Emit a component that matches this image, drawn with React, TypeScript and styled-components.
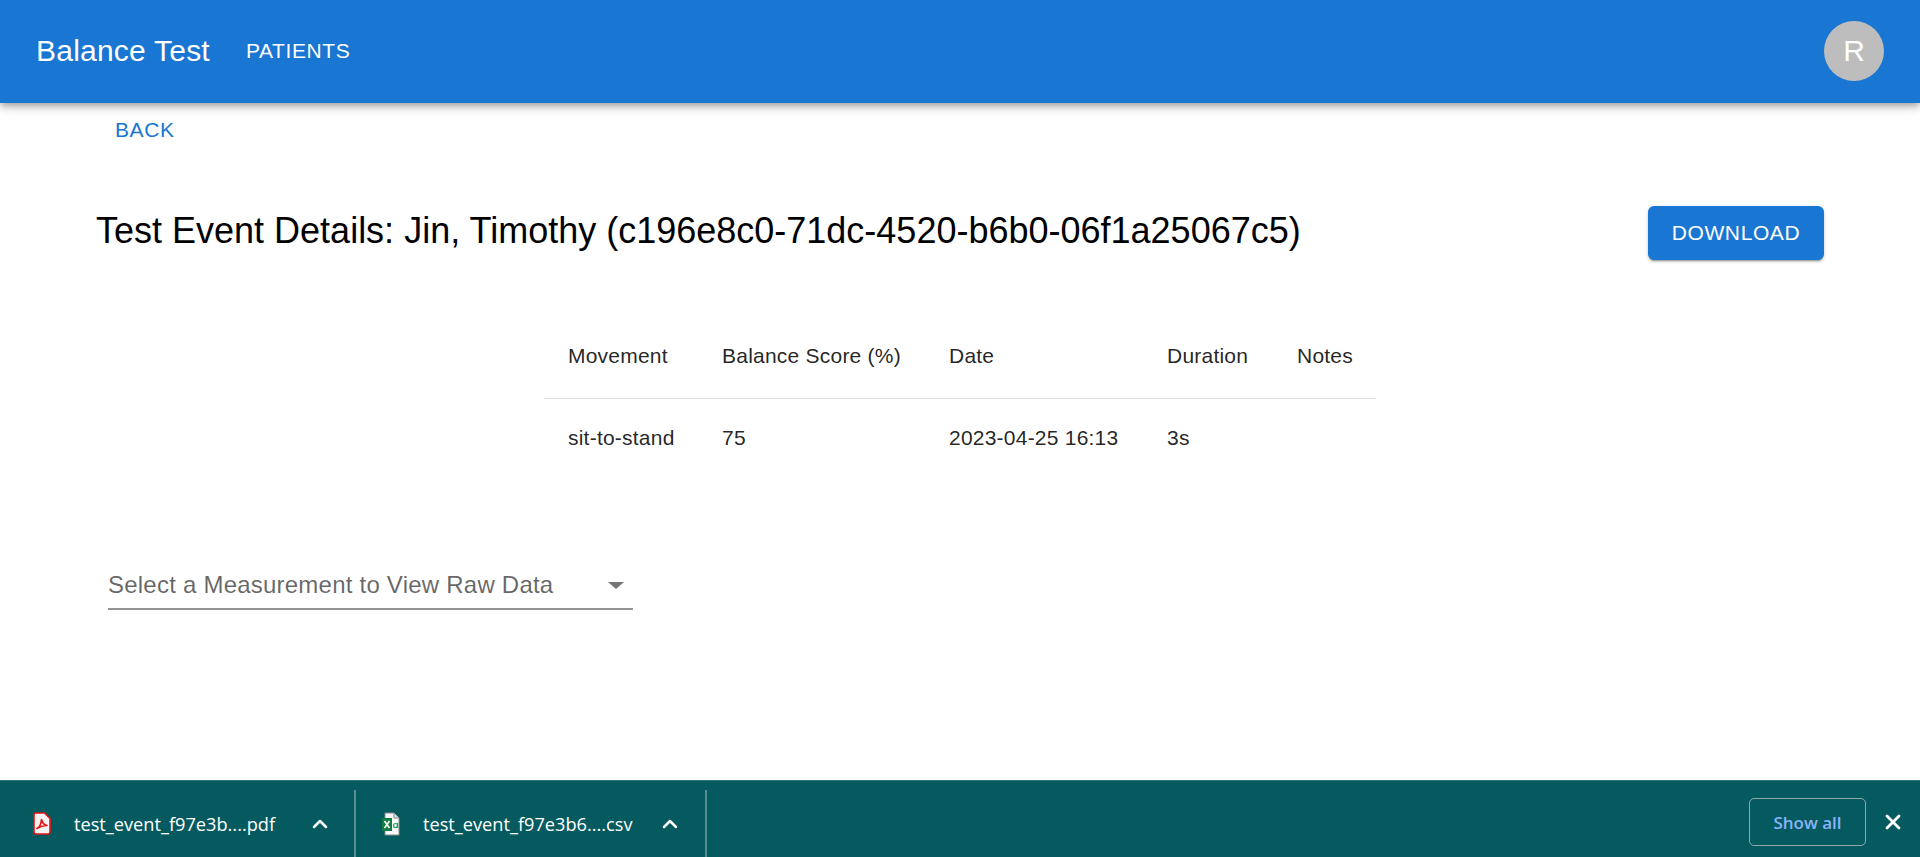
import { ChevronUp, X } from "lucide-react";
import styled, { createGlobalStyle } from "styled-components";

const GlobalStyle = createGlobalStyle`
  html, body {
    margin: 0;
    padding: 0;
    background: #fff;
    font-family: "Liberation Sans", Arial, sans-serif;
  }
  * {
    box-sizing: border-box;
  }
`;

const Page = styled.div`
  display: flex;
  flex-direction: column;
  height: 100vh;
  overflow: hidden;
`;

const AppBar = styled.header`
  display: flex;
  flex: none;
  align-items: center;
  height: 103px;
  padding: 0 36px 1px;
  color: #fff;
  background-color: #1976d2;
  box-shadow: 0 3px 6px -1px rgba(0, 0, 0, 0.2), 0 5px 8px 0 rgba(0, 0, 0, 0.14),
    0 1px 14px 0 rgba(0, 0, 0, 0.12);
`;

const Brand = styled.div`
  font-size: 30px;
  letter-spacing: 0.225px;
  margin-right: 36px;
`;

const NavLink = styled.a`
  font-size: 21px;
  letter-spacing: 0.6px;
  text-transform: uppercase;
`;

const Avatar = styled.div`
  display: flex;
  align-items: center;
  justify-content: center;
  width: 60px;
  height: 60px;
  margin-left: auto;
  border-radius: 50%;
  font-size: 30px;
  background-color: #bdbdbd;
`;

const Main = styled.main`
  flex: 1;
`;

const BackLink = styled.a`
  display: block;
  margin: 15px 0 0 115px;
  font-size: 21px;
  line-height: 24px;
  letter-spacing: 0.6px;
  color: #1976d2;
  text-transform: uppercase;
`;

const TitleRow = styled.div`
  display: flex;
  align-items: center;
  justify-content: space-between;
  margin-top: 64px;
  padding: 0 96px 0 96px;
`;

const Title = styled.h1`
  margin: 0 0 4px;
  font-size: 36px;
  line-height: 50px;
  font-weight: 400;
  color: #000;
`;

const DownloadButton = styled.button`
  width: 176px;
  height: 54px;
  border: 0;
  border-radius: 6px;
  font-family: inherit;
  font-size: 21px;
  letter-spacing: 0.6px;
  color: #fff;
  text-transform: uppercase;
  background-color: #1976d2;
  box-shadow: 0 3px 1px -2px rgba(0, 0, 0, 0.2), 0 2px 2px 0 rgba(0, 0, 0, 0.14),
    0 1px 5px 0 rgba(0, 0, 0, 0.12);
`;

const Table = styled.table`
  width: 832px;
  margin: 55px auto 0;
  border-collapse: collapse;
  table-layout: fixed;
  font-size: 21px;
  letter-spacing: 0.225px;
  color: rgba(0, 0, 0, 0.87);
`;

const HeadCell = styled.th<{ $width: number }>`
  width: ${(props) => props.$width}px;
  height: 83px;
  padding: 0 0 0 24px;
  border-bottom: 1px solid #e0e0e0;
  font-weight: 400;
  text-align: left;
`;

const Cell = styled.td`
  height: 80px;
  padding: 0 0 0 24px;
`;

const SelectField = styled.div`
  display: flex;
  align-items: center;
  justify-content: space-between;
  width: 525px;
  height: 48px;
  margin: 84px 0 0 108px;
  padding-right: 9px;
  border-bottom: 2px solid #949494;
  font-size: 24px;
  letter-spacing: 0.225px;
  color: rgba(0, 0, 0, 0.6);
`;

const SelectArrow = styled.span`
  width: 0;
  height: 0;
  border-top: 7px solid #757575;
  border-right: 8.5px solid transparent;
  border-left: 8.5px solid transparent;
`;

const Shelf = styled.footer`
  display: flex;
  flex: none;
  align-items: flex-end;
  height: 77px;
  border-top: 1px solid #2c7479;
  color: #fff;
  background-color: #055a60;
`;

const DownloadItem = styled.div<{ $width: number; $inset: number }>`
  display: flex;
  align-items: center;
  width: ${(props) => props.$width}px;
  height: 67px;
  padding-left: ${(props) => props.$inset}px;
  border-right: 2px solid #5c8d90;
`;

const FileName = styled.span<{ $width: number }>`
  width: ${(props) => props.$width}px;
  margin-left: 23px;
  font-family: "Open Sans", sans-serif;
  font-size: 18.2px;
  white-space: nowrap;
`;

const Caret = styled(ChevronUp)`
  flex: none;
`;

const ShelfActions = styled.div`
  display: flex;
  align-items: center;
  height: 100%;
  margin-left: auto;
  padding: 6px 15px 0 0;
`;

const ShowAll = styled.button`
  width: 117px;
  height: 48px;
  border: 1px solid #8fa9ab;
  border-radius: 5px;
  font-family: "Open Sans", sans-serif;
  font-size: 17px;
  font-weight: 600;
  color: #8ab4f8;
  background: transparent;
`;

const CloseIcon = styled(X)`
  margin-left: 15px;
`;

const PdfIcon = () => (
  <svg width="18" height="23" viewBox="0 0 18 23">
    <path
      d="M3 1h8.500L17 6.500V20a2 2 0 0 1-2 2H3a2 2 0 0 1-2-2V3a2 2 0 0 1 2-2z"
      fill="#f4f4f4"
      stroke="#e81313"
      strokeWidth="1.6"
    />
    <path
      d="M4 16.500c2-1 4-4.500 4.500-9 .8 3.500 2.500 5.500 5.500 6-3-.2-6.500.6-10 3z"
      fill="none"
      stroke="#e81313"
      strokeWidth="1.6"
      strokeLinejoin="round"
    />
  </svg>
);

const SheetIcon = () => (
  <svg width="18" height="24" viewBox="0 0 18 24">
    <path d="M3 1h9l5 5v17H3z" fill="#f7f7f7" stroke="#8c8c8c" strokeWidth="1" />
    <path d="M12 1v5h5" fill="#d8d8d8" stroke="#8c8c8c" strokeWidth="1" />
    <rect x="0" y="6" width="10" height="13" fill="#107c41" />
    <path d="M2.500 9l5 7M7.500 9l-5 7" stroke="#fff" strokeWidth="1.600" />
    <circle cx="13.500" cy="13.500" r="2" fill="none" stroke="#21a366" strokeWidth="1.200" />
    <path d="M15.500 11v5" stroke="#21a366" strokeWidth="1.200" />
  </svg>
);

const columns = [
  { label: "Movement", width: 154, value: "sit-to-stand" },
  { label: "Balance Score (%)", width: 227, value: "75" },
  { label: "Date", width: 218, value: "2023-04-25 16:13" },
  { label: "Duration", width: 130, value: "3s" },
  { label: "Notes", width: 103, value: "" },
];

const App = () => {
  return (
    <Page>
      <GlobalStyle />
      <AppBar>
        <Brand>Balance Test</Brand>
        <NavLink>Patients</NavLink>
        <Avatar>R</Avatar>
      </AppBar>
      <Main>
        <BackLink>Back</BackLink>
        <TitleRow>
          <Title>
            Test Event Details: Jin, Timothy (c196e8c0-71dc-4520-b6b0-06f1a25067c5)
          </Title>
          <DownloadButton>Download</DownloadButton>
        </TitleRow>
        <Table>
          <thead>
            <tr>
              {columns.map((col) => (
                <HeadCell key={col.label} $width={col.width}>
                  {col.label}
                </HeadCell>
              ))}
            </tr>
          </thead>
          <tbody>
            <tr>
              {columns.map((col) => (
                <Cell key={col.label}>{col.value}</Cell>
              ))}
            </tr>
          </tbody>
        </Table>
        <SelectField>
          Select a Measurement to View Raw Data
          <SelectArrow />
        </SelectField>
      </Main>
      <Shelf>
        <DownloadItem $width={356} $inset={33}>
          <PdfIcon />
          <FileName $width={234}>test_event_f97e3b....pdf</FileName>
          <Caret size={24} strokeWidth={2.5} />
        </DownloadItem>
        <DownloadItem $width={351} $inset={26}>
          <SheetIcon />
          <FileName $width={235}>test_event_f97e3b6....csv</FileName>
          <Caret size={24} strokeWidth={2.5} />
        </DownloadItem>
        <ShelfActions>
          <ShowAll>Show all</ShowAll>
          <CloseIcon size={24} strokeWidth={2.75} />
        </ShelfActions>
      </Shelf>
    </Page>
  );
};

export default App;
